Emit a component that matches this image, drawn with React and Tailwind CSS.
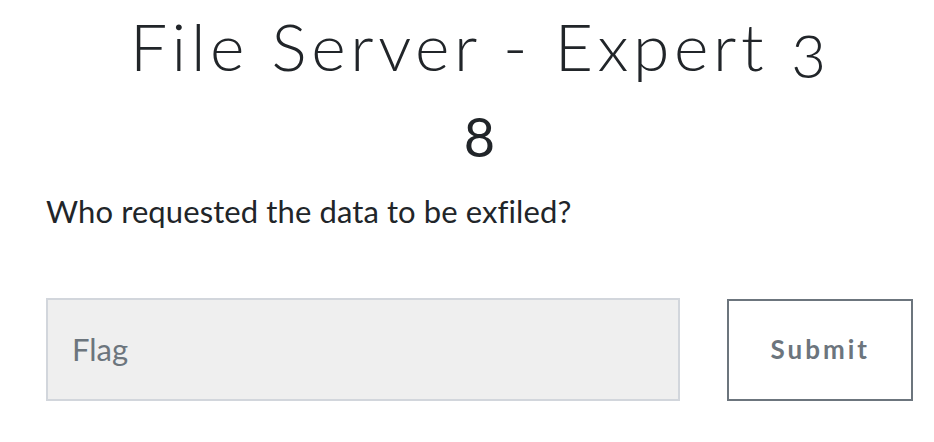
export default function App() {
  return (
    <div className="w-[934px] h-[442px] bg-white overflow-hidden" style={{ fontFamily: "Lato, 'Liberation Sans', sans-serif" }}>
      <div className="pl-[46px] pr-[21px]">
        <h2 className="text-center text-[66px] leading-[80px] font-light text-[#212529] tracking-[4.6px] pt-[6px] pl-[2px]">
          File Server - Expert <span className="oldstyle-nums">3</span>
        </h2>
        <h3 className="text-center text-[54px] leading-[62px] font-normal text-[#212529] mt-[20px]">8</h3>
        <p className="text-[31px] leading-[40px] text-[#212529] mt-[23px] tracking-[0.1px]">Who requested the data to be exfiled?</p>
        <div className="flex items-center mt-[67px] gap-[46px]">
          <div className="w-[636px] h-[103px] bg-[#efefef] border-2 border-[#d2d6dc] flex items-center px-[24px]">
            <span className="text-[31px] text-[#6c757d]">Flag</span>
          </div>
          <button className="w-[186px] h-[102px] ml-[1px] border-2 border-[#6c757d] bg-white text-[#6c757d] text-[26px] font-bold tracking-[3px]">
            Submit
          </button>
        </div>
      </div>
    </div>
  );
}
